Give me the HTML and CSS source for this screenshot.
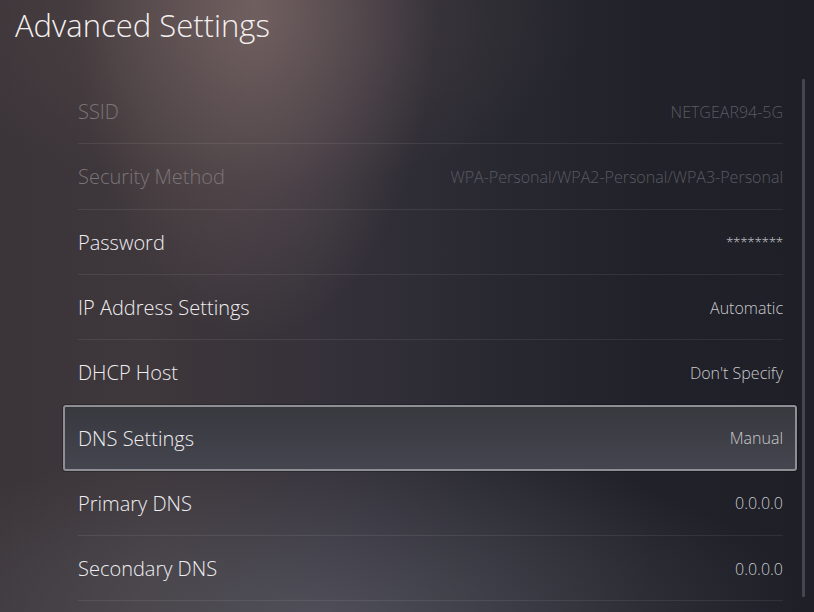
FILE: index.html
```html
<!DOCTYPE html>
<html lang="en">
<head>
<meta charset="utf-8">
<title>Advanced Settings</title>
<link rel="stylesheet" href="styles.css">
</head>
<body>
<div class="screen">
  <header class="header">
    <h1 class="title">Advanced Settings</h1>
  </header>
  <div class="content">
    <ul class="list">
      <li class="row disabled"><span class="label">SSID</span><span class="value">NETGEAR94-5G</span></li>
      <li class="row disabled"><span class="label">Security Method</span><span class="value">WPA-Personal/WPA2-Personal/WPA3-Personal</span></li>
      <li class="row"><span class="label">Password</span><span class="value masked">********</span></li>
      <li class="row"><span class="label">IP Address Settings</span><span class="value">Automatic</span></li>
      <li class="row before-selected"><span class="label">DHCP Host</span><span class="value">Don't Specify</span></li>
      <li class="row selected"><span class="label">DNS Settings</span><span class="value">Manual</span></li>
      <li class="row"><span class="label">Primary DNS</span><span class="value">0.0.0.0</span></li>
      <li class="row"><span class="label">Secondary DNS</span><span class="value">0.0.0.0</span></li>
    </ul>
    <div class="scrollbar"></div>
  </div>
</div>
</body>
</html>
```
FILE: styles.css
```css
* { box-sizing: border-box; }
html, body { margin: 0; padding: 0; }
body {
  width: 814px;
  height: 612px;
  overflow: hidden;
  font-family: "Open Sans", "Noto Sans", sans-serif;
}
.screen {
  width: 814px;
  height: 612px;
  display: flex;
  flex-direction: column;
  background:
    radial-gradient(ellipse 180px 340px at 255px 0px, rgba(150,125,120,0.5), rgba(150,125,120,0) 100%),
    radial-gradient(ellipse 340px 170px at 250px 20px, rgba(120,100,98,0.3), rgba(120,100,98,0) 100%),
    radial-gradient(ellipse 480px 170px at 320px 612px, rgba(100,102,112,0.55), rgba(100,102,112,0) 100%),
    linear-gradient(90deg, #3b3438 0%, #3e373b 18%, #35313a 40%, #282830 62%, #212129 80%, #1e1f27 100%);
}
.header {
  height: 79px;
  padding: 4px 0 0 15px;
}
.title {
  margin: 0;
  font-size: 31px;
  font-weight: 300;
  color: #f4f0f0;
  line-height: 42px;
}
.content {
  flex: 1;
  display: flex;
  padding-left: 63px;
}
.list {
  list-style: none;
  margin: 0;
  padding: 0;
  width: 734px;
}
.row {
  position: relative;
  height: 65.3px;
  display: flex;
  align-items: center;
  justify-content: space-between;
  padding: 0 14px 0 15px;
}
.row::after {
  content: "";
  position: absolute;
  left: 15px;
  right: 14px;
  bottom: 0;
  height: 1px;
  background: rgba(255,255,255,0.08);
}
.row.before-selected::after,
.row.selected::after { display: none; }
.label {
  font-size: 20px;
  color: #efeef1;
  font-weight: 300;
}
.value {
  font-size: 16px;
  font-weight: 300;
  color: #cacace;
}
.value.masked {
  font-size: 13.5px;
  letter-spacing: -0.3px;
}
.disabled .label { color: #7c7478; }
.disabled .value { color: #5a5a62; }
.row.selected {
  border: 2px solid #8e8e95;
  border-radius: 3px;
  background: linear-gradient(180deg, #38383f 0%, #44454e 100%);
  box-shadow: 0 0 0 1px rgba(0,0,0,0.25);
  padding: 0 12px 0 13px;
}
.scrollbar {
  width: 3px;
  margin-left: 5px;
  height: 518px;
  background: #44454e;
  border-radius: 1px;
}
```
